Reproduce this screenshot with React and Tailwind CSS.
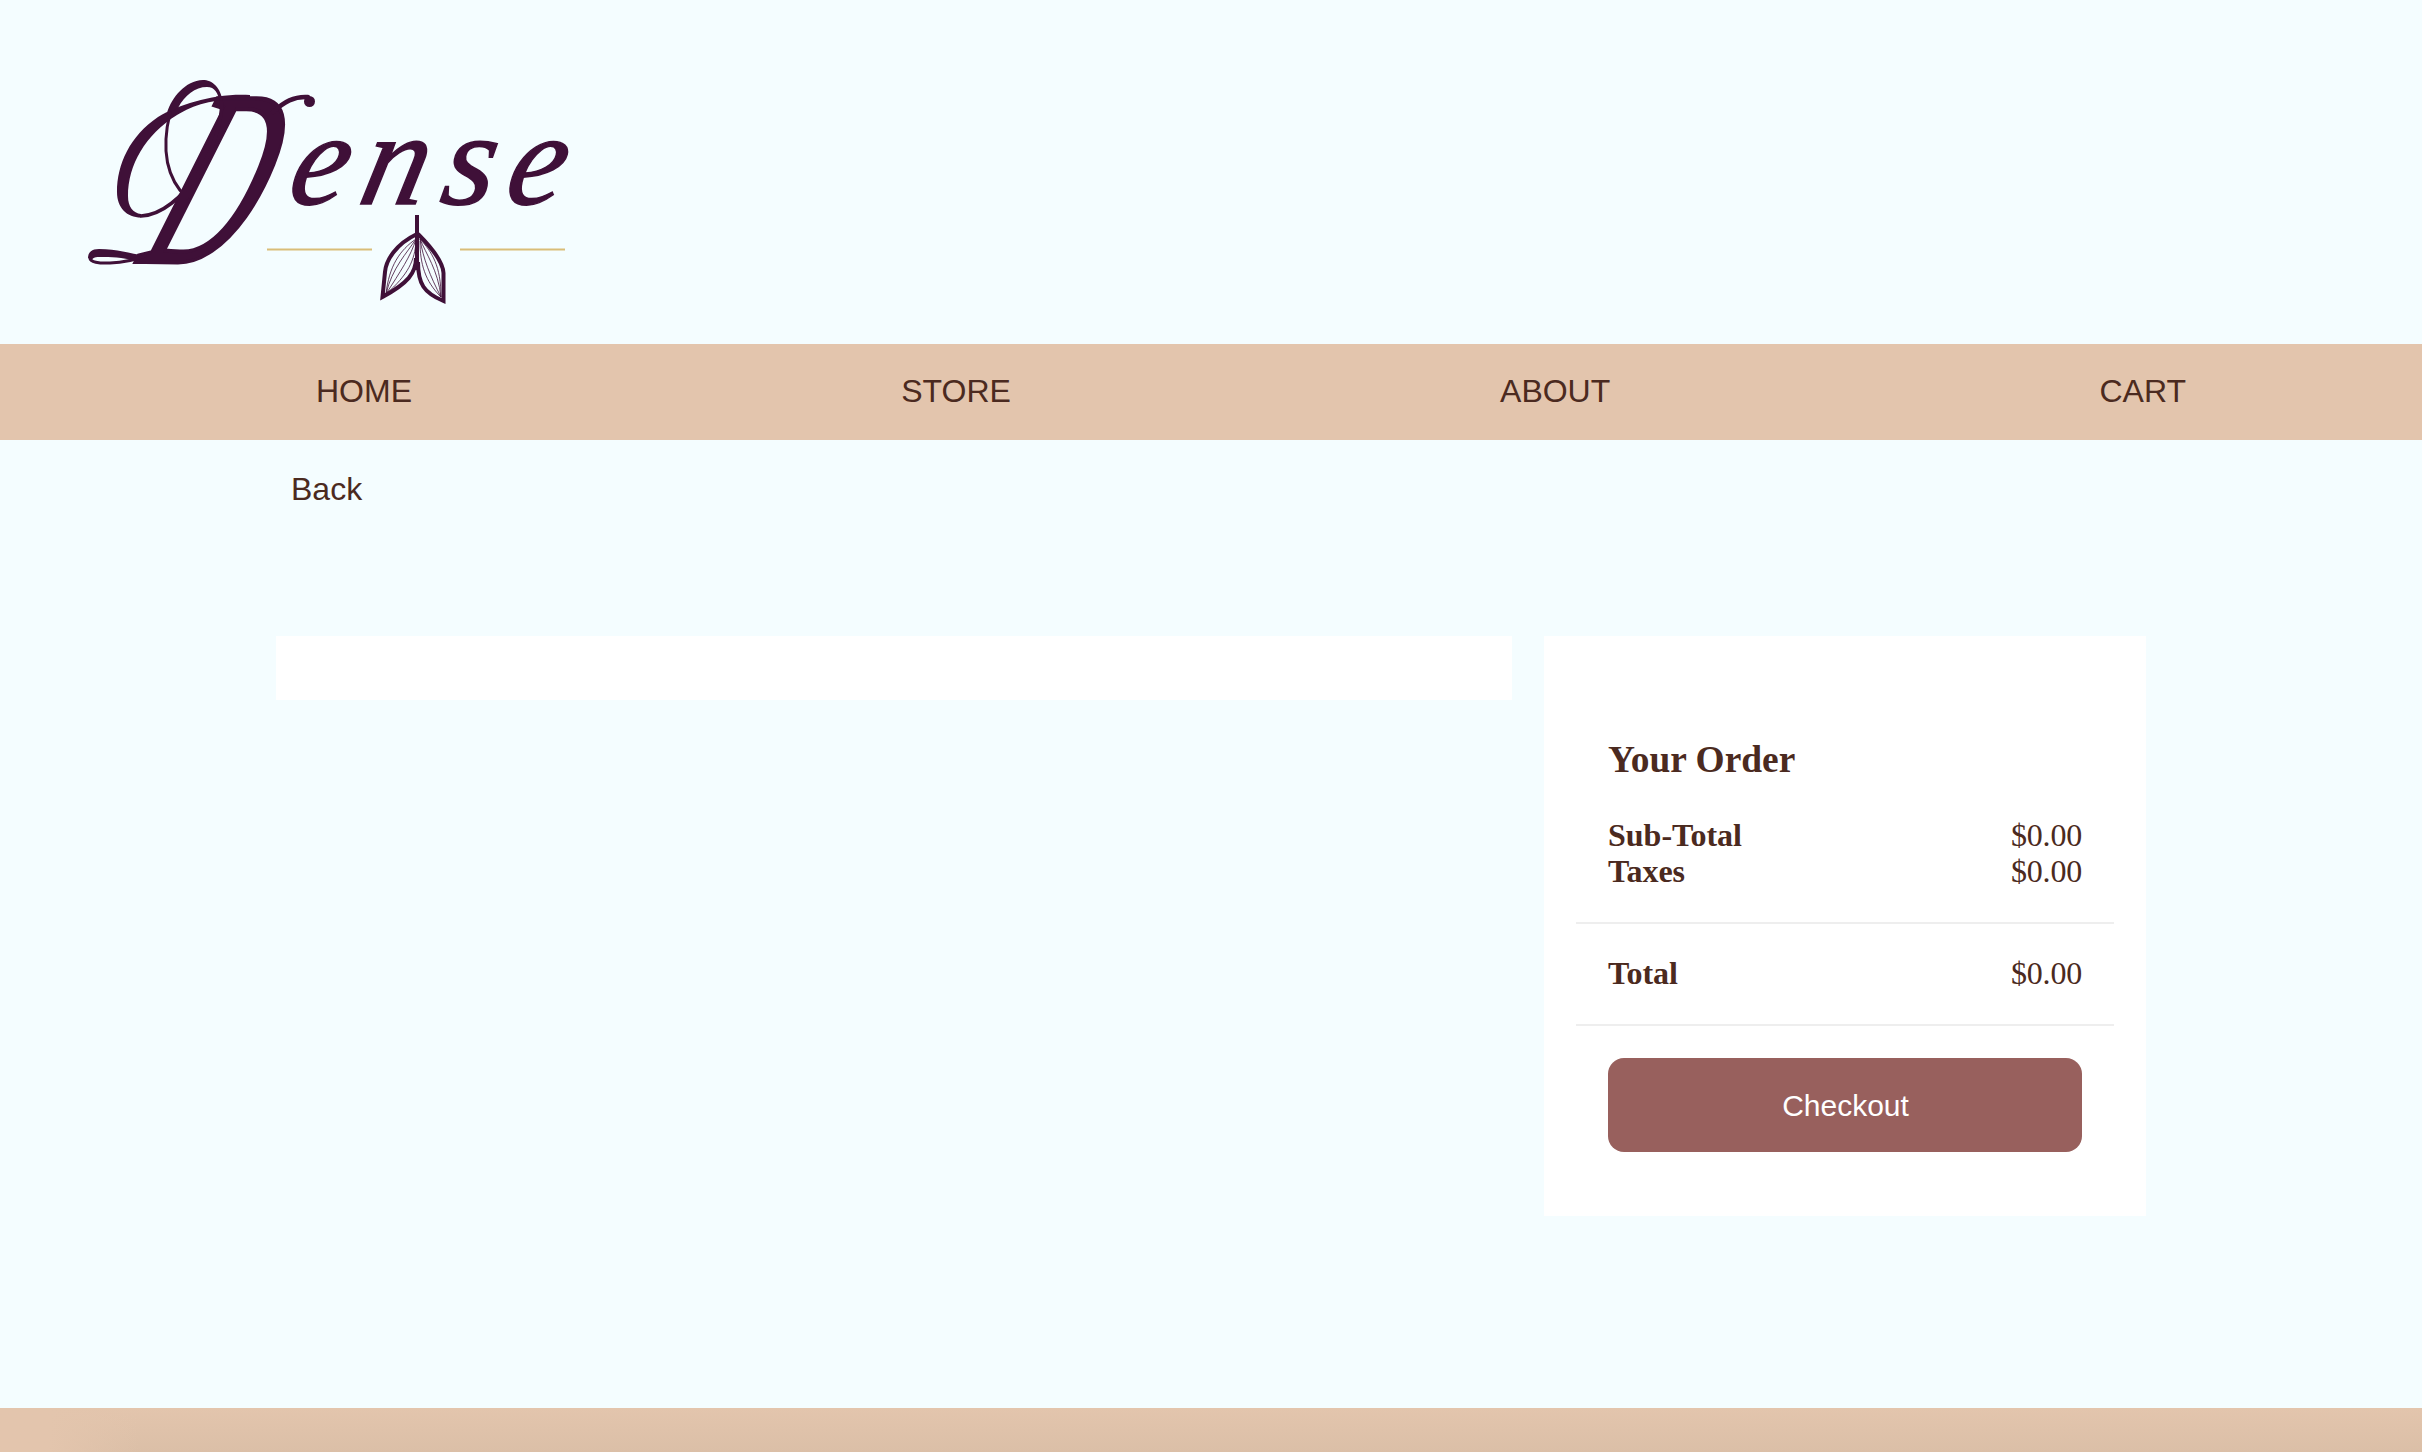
const ink = '#3f1038';

const leftVeins = [
  'M416 239C400 250 389 266 386 294',
  'M416 239C407 253 392 268 386 294',
  'M416 239C411 256 400 272 386 294',
  'M416 241C415 260 408 275 386 294',
];

const rightVeins = [
  'M420 239C432 252 441 266 441 297',
  'M420 239C426 254 438 270 441 297',
  'M420 239C423 258 430 276 441 297',
  'M420 241C420 264 425 281 441 297',
];

function Logo() {
  return (
    <svg width="520" height="260" viewBox="70 60 520 260" className="block overflow-visible" role="img" aria-label="Dense">
      <g fill={ink} fontFamily="'Liberation Serif', serif" fontStyle="italic" stroke={ink}>
        <text transform="translate(136 262) skewX(-22) scale(0.56 1)" fontSize="250" strokeWidth="4">D</text>
        <g fontSize="133" strokeWidth="1.5">
          <text transform="translate(285 204) skewX(-13) scale(0.96 1)">e</text>
          <text transform="translate(356 204) skewX(-13) scale(0.98 1)">n</text>
          <text transform="translate(438 204) skewX(-10) scale(1.02 1)">s</text>
          <text transform="translate(502 204) skewX(-13) scale(0.96 1)">e</text>
        </g>
      </g>

      {/* flourishes around the initial */}
      <g fill={ink}>
        <path d="M250 95C215 93 180 104 158 117C130 136 117 164 117 192C117 208 127 217.500 141 217.500L141 214C133 213 128 207 128 196C128 165 145 135 177 115C195 104 215 98 250 99Z" />
        <path d="M223 103C221 87 212 80 203 80C185 81 172 97 167 113L178 108C185 95 195 87 207 87C215 87 218 93 220 103Z" />
        <circle cx="309.500" cy="101.500" r="5.500" />
        <path d="M146 256C128 253 118 249 99 249C90 249 88 254 88 258L92 260C93 256 100 257 108 257C120 257 130 260 146 262Z" />
      </g>
      <g fill="none" stroke={ink} strokeLinecap="round">
        <path d="M141 216C183 214 223 144 221.500 102" strokeWidth="3.500" />
        <path d="M170 113C161 150 166 178 187 198" strokeWidth="3" />
        <path d="M273 112C284 102 294 96 308 97" strokeWidth="4.500" />
        <path d="M90 258C90 266 125 264 145 256" strokeWidth="3" />
      </g>

      <path fill="#d9bd78" d="M267 248.500H372V250.500H267zM460 248.500H565V250.500H460z" />

      {/* leaves */}
      <g fill="none" stroke={ink}>
        <path d="M417 215V270" strokeWidth="4" />
        <path d="M417 234C396 244 386 260 385 272L382.500 297C408 283 416 273 416 258" strokeWidth="4" />
        <path d="M418 234C434 250 443 263 443.500 273V301C424 293 418 284 418 262" strokeWidth="4" />
        {[...leftVeins, ...rightVeins].map((d) => (
          <path key={d} d={d} strokeWidth="0.800" />
        ))}
      </g>
    </svg>
  );
}

function Row({ label, value }) {
  return (
    <div className="flex justify-between">
      <span className="font-bold">{label}</span>
      <span className="tracking-[-0.2px]">{value}</span>
    </div>
  );
}

export default function App() {
  return (
    <div className="flex h-[1452px] flex-col overflow-hidden bg-[#f4fdff] font-['Liberation_Sans',Arial,sans-serif] text-[32px] leading-[36px] text-[#4b2a20]">
      <header className="h-[344px] pt-[60px] pl-[70px]">
        <Logo />
      </header>
      <nav className="flex h-24 items-start justify-between bg-[#e3c5ad] pt-[29px] pr-[236px] pl-[316px]">
        <a>HOME</a>
        <a>STORE</a>
        <a>ABOUT</a>
        <a>CART</a>
      </nav>
      <main className="flex-1 px-[276px] pt-[31px]">
        <a className="ml-[15px] block">Back</a>
        <div className="mt-[129px] flex items-start gap-8">
          <section className="h-16 w-[1236px] bg-white" />
          <section className="h-[580px] w-[602px] bg-white px-8 pt-[103px] font-['Liberation_Serif',serif]">
            <h2 className="px-8 text-[37.4px] leading-[42px] font-bold">Your Order</h2>
            <div className="mt-9 h-[107px] border-b-2 border-[#eee] px-8">
              <Row label="Sub-Total" value="$0.00" />
              <Row label="Taxes" value="$0.00" />
            </div>
            <div className="h-[102px] border-b-2 border-[#eee] px-8 pt-[31px]">
              <Row label="Total" value="$0.00" />
            </div>
            <button className="mx-8 mt-8 block h-[94px] w-[474px] rounded-2xl bg-[#98605d] pt-0.5 pl-px font-['Liberation_Sans',Arial,sans-serif] text-[30px] text-white">
              Checkout
            </button>
          </section>
        </div>
      </main>
      <footer className="h-11 bg-linear-to-b from-[#e3c5ad] to-[#dbbfa7]">
        <div className="h-full w-[140px] bg-linear-to-r from-[#e3c5ad] from-35% to-[#e3c5ad]/0" />
      </footer>
    </div>
  );
}
